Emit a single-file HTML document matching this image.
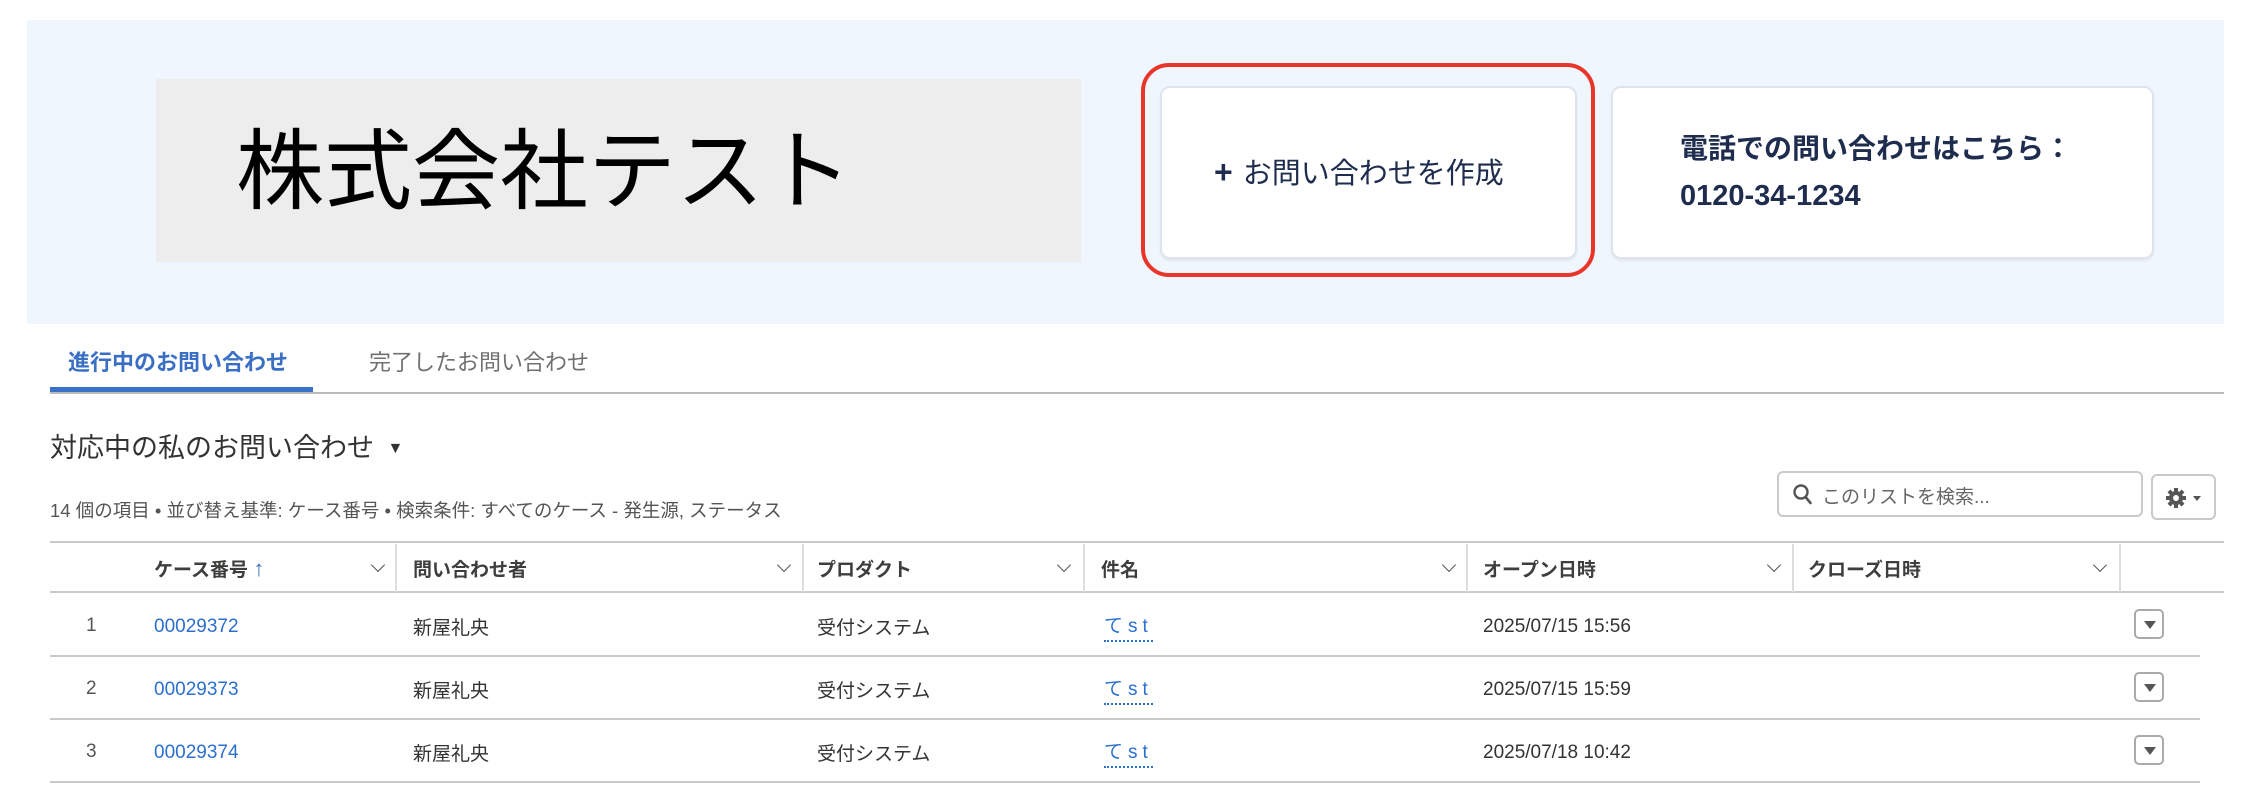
<!DOCTYPE html>
<html><head><meta charset="utf-8"><style>
*{margin:0;padding:0;box-sizing:border-box}
body{width:2260px;height:800px;background:#fff;position:relative;overflow:hidden;font-family:"Liberation Sans","Noto Sans CJK JP",sans-serif;color:#333}
.a{position:absolute;white-space:nowrap}
.banner{left:27px;top:20px;width:2197px;height:304px;background:#eff6fd}
.gray{left:156px;top:79px;width:925px;height:183px;background:#ededed}
.card{background:#fff;border:2px solid #dfe4ec;border-radius:10px;box-shadow:0 2px 2px rgba(0,0,0,.06)}
.red{left:1141px;top:63px;width:454px;height:214px;border:4px solid #e8362b;border-radius:28px}
.hdr{font-size:19px;font-weight:bold;color:#3e3e3c;top:555px}
.chev{width:10px;height:10px;border-right:1.5px solid #555;border-bottom:1.5px solid #555;transform:rotate(45deg);top:560px}
.sep{top:544px;width:2px;height:48px;background:#ddd}
.hl{height:2px;background:#c9c9c9;left:50px}
.cell{font-size:19px;color:#333}
.num{margin-top:3px}
.link{color:#2b6fcf}
.tst{color:#2b6fcf;border-bottom:2px dotted #2b6fcf;letter-spacing:5px;padding-bottom:2px}
.btn{width:30px;height:30px;border:2px solid #aaa;border-radius:5px;left:2134px}
.btn:after{content:"";position:absolute;left:8px;top:10px;border-left:6px solid transparent;border-right:6px solid transparent;border-top:8px solid #555}
</style></head><body>
<div class="a banner"></div>
<div class="a gray"></div>
<div class="a" style="left:236px;top:128px;font-size:88px;color:#000;line-height:1">株式会社テスト</div>
<div class="a red"></div>
<div class="a card" style="left:1160px;top:86px;width:417px;height:173px"></div>
<div class="a" style="left:1214px;top:156px;font-size:29px;color:#1e2c4e;line-height:1"><b style="font-size:32px;margin-right:10px">+</b>お問い合わせを作成</div>
<div class="a card" style="left:1611px;top:86px;width:543px;height:173px"></div>
<div class="a" style="left:1680px;top:135px;font-size:28px;font-weight:bold;color:#1e2c4e;line-height:1">電話での問い合わせはこちら：</div>
<div class="a" style="left:1680px;top:182px;font-size:29px;font-weight:bold;color:#1e2c4e;line-height:1">0120-34-1234</div>

<div class="a" style="left:68px;top:345px;font-size:22px;font-weight:bold;color:#3a6fc4">進行中のお問い合わせ</div>
<div class="a" style="left:369px;top:345px;font-size:22px;color:#707070">完了したお問い合わせ</div>
<div class="a" style="left:50px;top:392px;width:2174px;height:2px;background:#bbb"></div>
<div class="a" style="left:50px;top:387px;width:263px;height:5px;background:#3a72c8"></div>

<div class="a" style="left:50px;top:426px;font-size:27px;color:#333">対応中の私のお問い合わせ <span style="font-size:16px;margin-left:6px;vertical-align:4px">▼</span></div>
<div class="a" style="left:50px;top:497px;font-size:18.5px;color:#555">14 個の項目 • 並び替え基準: ケース番号 • 検索条件: すべてのケース - 発生源, ステータス</div>

<div class="a" style="left:1777px;top:471px;width:366px;height:46px;border:2px solid #c9c9c9;border-radius:6px"></div>
<svg class="a" style="left:1792px;top:483px" width="22" height="24" viewBox="0 0 22 24"><circle cx="9" cy="9" r="6.5" fill="none" stroke="#555" stroke-width="2.4"/><path d="M13.5 14l5 6" stroke="#555" stroke-width="2.6" stroke-linecap="round"/></svg>
<div class="a" style="left:1822px;top:482px;font-size:19px;color:#666">このリストを検索...</div>
<div class="a" style="left:2151px;top:474px;width:65px;height:46px;border:2px solid #c9c9c9;border-radius:6px"></div>
<svg class="a" style="left:2164px;top:486px" width="24" height="24" viewBox="0 0 24 24"><g fill="#555"><circle cx="12" cy="12" r="7"/><rect x="10" y="2" width="4" height="20"/><rect x="2" y="10" width="20" height="4"/><rect x="10" y="2" width="4" height="20" transform="rotate(45 12 12)"/><rect x="10" y="2" width="4" height="20" transform="rotate(-45 12 12)"/></g><circle cx="12" cy="12" r="3" fill="#fff"/></svg>
<div class="a" style="left:2193px;top:496px;border-left:4px solid transparent;border-right:4px solid transparent;border-top:5px solid #555"></div>

<div class="a hl" style="top:541px;width:2174px"></div>
<div class="a hl" style="top:591px;width:2174px"></div>
<div class="a sep" style="left:395px"></div><div class="a sep" style="left:802px"></div><div class="a sep" style="left:1083px"></div><div class="a sep" style="left:1466px"></div><div class="a sep" style="left:1792px"></div><div class="a sep" style="left:2119px"></div>
<div class="a hdr" style="left:154px">ケース番号 <span style="color:#3a6fc4;font-size:22px">↑</span></div>
<div class="a hdr" style="left:413px">問い合わせ者</div>
<div class="a hdr" style="left:817px">プロダクト</div>
<div class="a hdr" style="left:1101px">件名</div>
<div class="a hdr" style="left:1483px">オープン日時</div>
<div class="a hdr" style="left:1808px">クローズ日時</div>
<div class="a chev" style="left:373px"></div><div class="a chev" style="left:779px"></div><div class="a chev" style="left:1059px"></div><div class="a chev" style="left:1444px"></div><div class="a chev" style="left:1769px"></div><div class="a chev" style="left:2095px"></div>

<div class="a hl" style="top:655px;width:2150px"></div>
<div class="a hl" style="top:718px;width:2150px"></div>
<div class="a hl" style="top:781px;width:2150px"></div>

<div class="a cell" style="left:86px;top:615px;color:#555">1</div>
<div class="a cell link num" style="left:154px;top:613px">00029372</div>
<div class="a cell" style="left:413px;top:613px">新屋礼央</div>
<div class="a cell" style="left:817px;top:613px">受付システム</div>
<div class="a cell tst" style="left:1104px;top:611px">てst</div>
<div class="a cell num" style="left:1483px;top:613px">2025/07/15 15:56</div>
<div class="a btn" style="top:609px"></div>

<div class="a cell" style="left:86px;top:678px;color:#555">2</div>
<div class="a cell link num" style="left:154px;top:676px">00029373</div>
<div class="a cell" style="left:413px;top:676px">新屋礼央</div>
<div class="a cell" style="left:817px;top:676px">受付システム</div>
<div class="a cell tst" style="left:1104px;top:674px">てst</div>
<div class="a cell num" style="left:1483px;top:676px">2025/07/15 15:59</div>
<div class="a btn" style="top:672px"></div>

<div class="a cell" style="left:86px;top:741px;color:#555">3</div>
<div class="a cell link num" style="left:154px;top:739px">00029374</div>
<div class="a cell" style="left:413px;top:739px">新屋礼央</div>
<div class="a cell" style="left:817px;top:739px">受付システム</div>
<div class="a cell tst" style="left:1104px;top:737px">てst</div>
<div class="a cell num" style="left:1483px;top:739px">2025/07/18 10:42</div>
<div class="a btn" style="top:735px"></div>
</body></html>
